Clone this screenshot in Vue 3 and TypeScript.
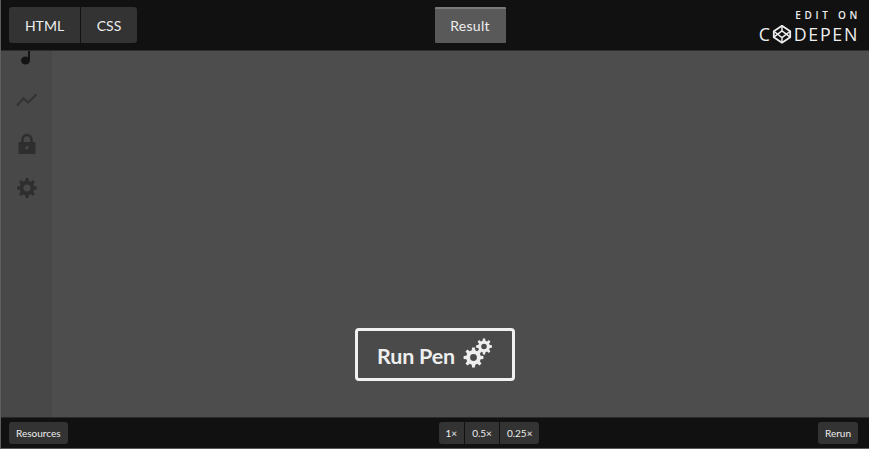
<script setup lang="ts">
const sideIcons: string[] = ['note', 'chart', 'lock', 'gear']
const zooms: string[] = ['1×', '0.5×', '0.25×']
const gearPath = (cx: number, cy: number, r: number, hole: number): string => {
  const teeth = 8
  const pts: string[] = []
  for (let i = 0; i < teeth; i++) {
    const a = (i / teeth) * Math.PI * 2
    const s = Math.PI / teeth
    const p = (rad: number, ang: number) =>
      `${(cx + rad * Math.cos(ang)).toFixed(2)} ${(cy + rad * Math.sin(ang)).toFixed(2)}`
    pts.push(p(r * 0.74, a - s * 0.62), p(r, a - s * 0.36), p(r, a + s * 0.36), p(r * 0.74, a + s * 0.62))
  }
  const ring = `M${cx - hole} ${cy}a${hole} ${hole} 0 1 0 ${hole * 2} 0a${hole} ${hole} 0 1 0 ${-hole * 2} 0Z`
  return `M${pts.join('L')}Z${ring}`
}
const bigGear = gearPath(10.5, 19.5, 10, 3.4)
const smallGear = gearPath(21, 8.500, 8, 2.8)
const sideGear = gearPath(10, 10, 10, 3.6)
</script>

<template>
  <div class="embed">
    <header class="topbar">
      <div class="tabs">
        <a class="tab">HTML</a>
        <a class="tab">CSS</a>
      </div>
      <div class="center-tab">
        <a class="tab tab-active">Result</a>
      </div>
      <div class="brand">
        <span class="edit-on">EDIT ON</span>
        <span class="wordmark">
          <span>C</span>
          <svg class="cube" viewBox="0 0 22 22" fill="none" stroke="#eee" stroke-width="2" stroke-linejoin="round">
            <path d="M11 2 20 8v6.5L11 20.5 2 14.500V8Z" />
            <path d="M11 2v5.500M11 15v5.500M2 8l9 7 9-7M2 14.500l9-7 9 7" stroke-width="1.600" />
          </svg>
          <span>DEPEN</span>
        </span>
      </div>
    </header>

    <main class="stage">
      <aside class="sidebar">
        <template v-for="icon in sideIcons" :key="icon">
          <svg v-if="icon === 'note'" class="note" viewBox="0 0 14 24">
            <ellipse cx="5.500" cy="19.500" rx="4.500" ry="4" fill="#141414" />
            <path d="M9 2v17" stroke="#141414" stroke-width="2" />
          </svg>
          <svg v-else-if="icon === 'chart'" class="chart" viewBox="0 0 22 14" fill="none" stroke="#333" stroke-width="2.200">
            <path d="M1 12.500 7.500 5.500l4.500 4L20.500 1.500" />
          </svg>
          <svg v-else-if="icon === 'lock'" class="lock" viewBox="0 0 18 22">
            <path d="M4.500 10V6.500a4.500 4.500 0 0 1 9 0V10" fill="none" stroke="#2e2e2e" stroke-width="2.400" />
            <path fill-rule="evenodd" fill="#2e2e2e" d="M1.500 9h15a1 1 0 0 1 1 1v10a1 1 0 0 1-1 1h-15a1 1 0 0 1-1-1V10a1 1 0 0 1 1-1ZM9 13a1.800 1.800 0 1 0 0 3.600A1.800 1.800 0 0 0 9 13Z" />
          </svg>
          <svg v-else class="gear" viewBox="0 0 20 20">
            <path fill-rule="evenodd" fill="#2e2e2e" :d="sideGear" />
          </svg>
        </template>
      </aside>
      <div class="run-layer">
        <button class="run" type="button">
          <span>Run Pen</span>
          <svg class="gears" viewBox="0 0 30 30">
            <path fill-rule="evenodd" fill="#eee" :d="bigGear" />
            <path fill-rule="evenodd" fill="#eee" :d="smallGear" />
          </svg>
        </button>
      </div>
    </main>

    <footer class="bottombar">
      <div class="foot-left"><a class="mini">Resources</a></div>
      <div class="zooms">
        <a v-for="z in zooms" :key="z" class="mini zoom">{{ z }}</a>
      </div>
      <div class="foot-right"><a class="mini">Rerun</a></div>
    </footer>
  </div>
</template>

<style>
html, body { margin: 0; background: #4d4d4d; }
</style>

<style scoped>
.embed {
  width: 869px;
  height: 449px;
  box-sizing: border-box;
  border-left: 1px solid #5e5e5e;
  border-bottom: 1px solid #5a5a5a;
  display: flex;
  flex-direction: column;
  overflow: hidden;
  font-family: Lato, "Open Sans", sans-serif;
  background: #4d4d4d;
}
.topbar {
  height: 50px;
  flex: none;
  background: #111;
  display: grid;
  grid-template-columns: 1fr auto 1fr;
  align-items: start;
  padding: 7px 12px 0 8px;
  box-sizing: border-box;
}
.tabs { display: flex; gap: 1px; }
.tab {
  height: 36px;
  box-sizing: border-box;
  display: flex;
  align-items: center;
  justify-content: center;
  background: #333;
  color: #eee;
  font-size: 14px;
}
.tabs .tab:first-child { width: 71px; border-radius: 3px 0 0 3px; }
.tabs .tab:last-child { width: 56px; border-radius: 0 3px 3px 0; }
.tab-active {
  width: 71px;
  background: #595959;
  border-top: 2px solid #7a7a7a;
  border-radius: 1px;
  padding-bottom: 1px;
  letter-spacing: 0.3px;
}
.center-tab { display: flex; margin-left: 74px; }
.brand {
  justify-self: end;
  display: flex;
  flex-direction: column;
  align-items: flex-end;
  color: #eee;
  margin-top: 2px;
}
.edit-on {
  font-size: 10px;
  font-weight: 600;
  line-height: 13px;
  letter-spacing: 3.700px;
  margin-right: -4px;
  font-family: "Open Sans", sans-serif;
}
.wordmark {
  display: flex;
  align-items: center;
  font-size: 17.800px;
  line-height: 18px;
  letter-spacing: 1.700px;
  font-family: "Open Sans", sans-serif;
  margin-top: 2px;
  margin-right: -2px;
}
.cube { width: 20px; height: 20px; margin: 0 2px 0 0; }
.stage {
  flex: 1;
  min-height: 0;
  display: grid;
  grid-template-columns: 51px 1fr;
  border-top: 1px solid #2e2e2e;
  border-bottom: 1px solid #2a2a2a;
  background: #4d4d4d;
}
.sidebar {
  grid-column: 1;
  grid-row: 1;
  background: #484848;
  display: flex;
  flex-direction: column;
  align-items: center;
  overflow: hidden;
}
.note { width: 14px; height: 24px; margin: -10px 0 0 1px; flex: none; }
.chart { width: 22px; height: 14px; margin-top: 28px; flex: none; }
.lock { width: 18px; height: 22px; margin-top: 26px; flex: none; }
.gear { width: 20px; height: 20px; margin-top: 23px; flex: none; }
.run-layer {
  grid-column: 1 / -1;
  grid-row: 1;
  display: flex;
  justify-content: center;
  align-items: flex-end;
  padding-bottom: 36px;
}
.run {
  width: 160px;
  height: 53px;
  box-sizing: border-box;
  display: flex;
  align-items: center;
  justify-content: center;
  gap: 8px;
  padding: 0;
  background: #4a4a4a;
  border: 3px solid #f0f0f0;
  border-radius: 4px;
  color: #eee;
  font: 700 21.500px Lato, sans-serif;
  letter-spacing: -0.2px;
}
.run span { padding-top: 2px; }
.gears { width: 30px; height: 30px; margin-top: -3px; }
.bottombar {
  height: 30px;
  flex: none;
  background: #111;
  display: grid;
  grid-template-columns: 1fr auto 1fr;
  align-items: center;
  padding: 0 11px 0 8px;
  box-sizing: border-box;
}
.foot-left { display: flex; }
.foot-right { display: flex; justify-content: flex-end; }
.mini {
  height: 22px;
  display: flex;
  align-items: center;
  padding: 0 7px;
  background: #333;
  border-radius: 3px;
  color: #eee;
  font-size: 10px;
}
.zooms { display: flex; gap: 1px; margin-left: 111px; }
.zoom { border-radius: 0; }
.zoom:first-child { border-radius: 3px 0 0 3px; }
.zoom:last-child { border-radius: 0 3px 3px 0; }
</style>
